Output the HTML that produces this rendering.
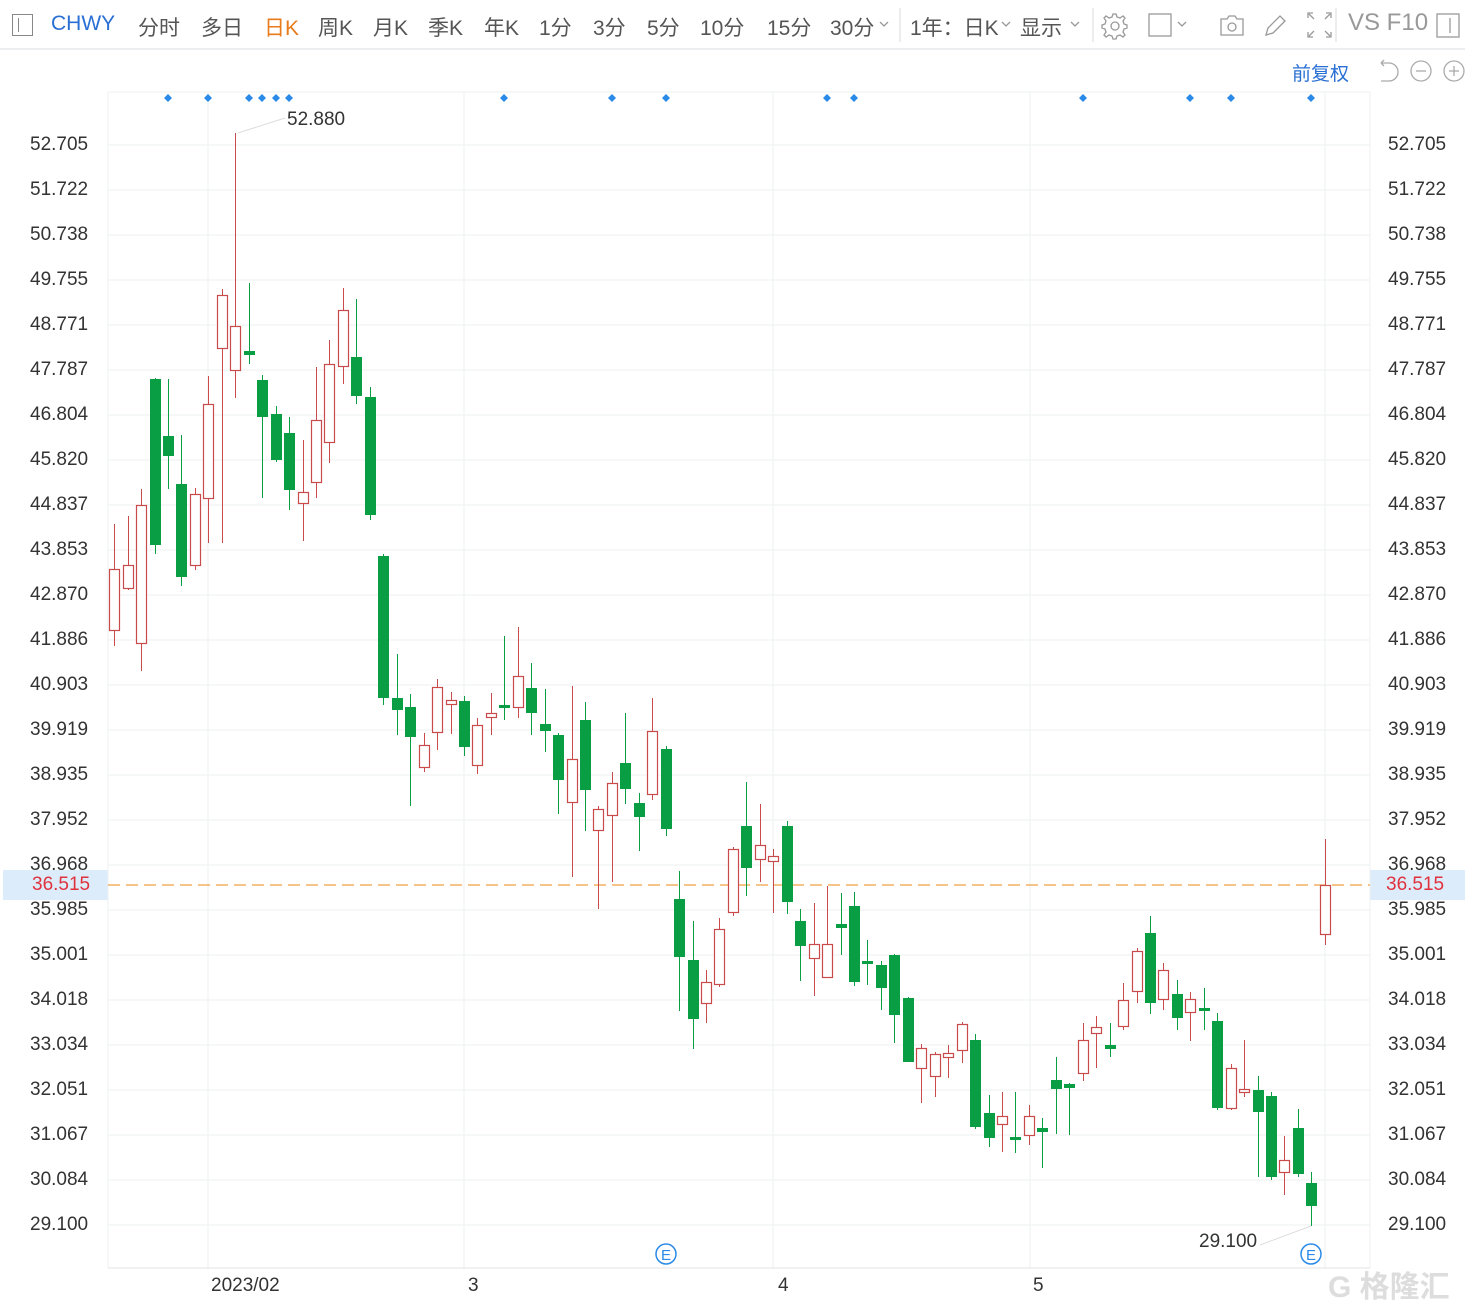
<!DOCTYPE html>
<html><head><meta charset="utf-8">
<style>
body{margin:0;width:1465px;height:1307px;background:#fff;position:relative;overflow:hidden;font-family:"Liberation Sans","Noto Sans CJK SC",sans-serif;}
.t{position:absolute;font-size:21px;color:#555;top:12px;white-space:nowrap;}
.l{position:absolute;font-size:19px;color:#333;white-space:nowrap;}
</style></head><body>
<div style="position:absolute;left:0;top:0;width:1465px;height:48px;border-bottom:2px solid #eceef0;"></div>
<div style="position:absolute;left:12px;top:14px;width:21px;height:22px;border:1.5px solid #888;box-sizing:border-box"><div style="position:absolute;left:5px;top:3px;width:1px;height:14px;background:#888"></div></div>
<span class="t" style="left:51px;color:#2a6fd4">CHWY</span>
<span class="t" style="left:138px">分时</span>
<span class="t" style="left:201px">多日</span>
<span class="t" style="left:264px;color:#e87b1c">日K</span>
<span class="t" style="left:318px">周K</span>
<span class="t" style="left:373px">月K</span>
<span class="t" style="left:428px">季K</span>
<span class="t" style="left:484px">年K</span>
<span class="t" style="left:539px">1分</span>
<span class="t" style="left:593px">3分</span>
<span class="t" style="left:647px">5分</span>
<span class="t" style="left:700px">10分</span>
<span class="t" style="left:767px">15分</span>
<span class="t" style="left:830px">30分</span>
<span class="t" style="left:910px">1年：日K</span>
<span class="t" style="left:1020px">显示</span>
<span class="t" style="left:1348px;font-size:24px;top:9px;color:#999">VS F10</span>
<svg style="position:absolute;left:0;top:0" width="1465" height="50">
<g fill="none" stroke="#999" stroke-width="1.3">
<path d="M880 22l4 4 4-4"/><path d="M1002 22l4 4 4-4"/><path d="M1071 22l4 4 4-4"/><path d="M1178 22l4 4 4-4"/>
<line x1="900" y1="8" x2="900" y2="42" stroke="#e3e3e3"/><line x1="1093" y1="8" x2="1093" y2="42" stroke="#e3e3e3"/><line x1="1336" y1="8" x2="1336" y2="42" stroke="#e3e3e3"/>
<path d="M1115 13l3 0 1 3 3 1 3-2 2 2-2 3 1 3 3 1v3l-3 1-1 3 2 3-2 2-3-2-3 1-1 3h-3l-1-3-3-1-3 2-2-2 2-3-1-3-3-1v-3l3-1 1-3-2-3 2-2 3 2 3-1z" transform="translate(-2,1)"/>
<circle cx="1115" cy="26" r="4"/>
<rect x="1149" y="14" width="22" height="22"/>
<path d="M1221 19h6l2-3h6l2 3h6v16h-22z"/><circle cx="1232" cy="27" r="4"/>
<path d="M1266 35l2-7 12-12 5 5-12 12z"/>
<path d="M1308 18v-5h5M1326 13h5v5M1308 32v5h5M1331 32v5h-5M1309 14l5 5M1330 14l-5 5M1309 36l5-5M1330 36l-5-5"/>
<rect x="1437" y="14" width="22" height="23"/><line x1="1450" y1="18" x2="1450" y2="33"/>
</g></svg>
<span class="t" style="left:1292px;top:59px;font-size:19px;color:#2a6fd4">前复权</span>
<svg style="position:absolute;left:1375px;top:58px" width="90" height="28" fill="none" stroke="#aaa" stroke-width="1.3">
<path d="M6 5h8a9 9 0 0 1 0 18h-8M6 5l3-3M6 5l3 3"/>
<circle cx="46" cy="13" r="10"/><line x1="41" y1="13" x2="51" y2="13"/>
<circle cx="79" cy="13" r="10"/><line x1="74" y1="13" x2="84" y2="13"/><line x1="79" y1="8" x2="79" y2="18"/>
</svg>
<div style="position:absolute;left:3px;top:870px;width:105px;height:30px;background:#dcecfb"></div>
<div style="position:absolute;left:1370px;top:870px;width:95px;height:30px;background:#dcecfb"></div>
<svg id="c" style="position:absolute;left:0;top:0" width="1465" height="1307"></svg>
<div id="labels"></div>
<span class="l" style="left:287px;top:109px">52.880</span>
<span class="l" style="left:1199px;top:1231px">29.100</span>
<span class="l" style="left:211px;top:1275px">2023/02</span>
<span class="l" style="left:468px;top:1275px">3</span>
<span class="l" style="left:778px;top:1275px">4</span>
<span class="l" style="left:1033px;top:1275px">5</span>
<span style="position:absolute;left:1328px;top:1262px;font-size:30px;color:#ddd;font-weight:bold;white-space:nowrap">G 格隆汇</span>
<script>
var s='';
var prices=["52.705","51.722","50.738","49.755","48.771","47.787","46.804","45.820","44.837","43.853","42.870","41.886","40.903","39.919","38.935","37.952","36.968","35.985","35.001","34.018","33.034","32.051","31.067","30.084","29.100"];
var lab='';
for(var i=0;i<prices.length;i++){var y=145+i*45;
s+='<line x1="108" y1="'+y+'" x2="1370" y2="'+y+'" stroke="#eef0f2"/>';
lab+='<span class="l" style="left:30px;top:'+(y-11)+'px">'+prices[i]+'</span><span class="l" style="left:1388px;top:'+(y-11)+'px">'+prices[i]+'</span>';}
lab+='<span class="l" style="left:32px;top:874px;color:#e0323c">36.515</span><span class="l" style="left:1386px;top:874px;color:#e0323c">36.515</span>';
document.getElementById('labels').innerHTML=lab;
[108,208,464,773,1030,1325,1370].forEach(function(x){s+='<line x1="'+x+'" y1="92" x2="'+x+'" y2="1268" stroke="#eef0f2"/>';});
s+='<line x1="108" y1="92" x2="1370" y2="92" stroke="#eef0f2"/><line x1="108" y1="1268" x2="1370" y2="1268" stroke="#e3e3e3"/>';
s+='<line x1="108" y1="885" x2="1370" y2="885" stroke="#f0a040" stroke-dasharray="12,6" stroke-width="1.3"/>';
[168,208,249,262,276,289,504,612,666,827,854,1083,1190,1231,1311].forEach(function(x){s+='<path d="M'+x+' 94l4 4-4 4-4-4z" fill="#2a8ae8"/>';});
s+='<line x1="238" y1="133" x2="285" y2="118" stroke="#ddd"/><line x1="1260" y1="1245" x2="1311" y2="1226" stroke="#ddd"/>';
var d=[[114,569,630,524,646,'r'],[128,565,588,516,590,'r'],[141,505,643,489,671,'r'],[155,379,545,378,554,'g'],[168,436,456,379,489,'g'],[181,484,577,435,586,'g'],[195,494,565,488,570,'r'],[208,404,498,376,543,'r'],[222,295,348,289,543,'r'],[235,326,370,133,398,'r'],[249,351,355,283,364,'g'],[262,380,417,375,498,'g'],[276,414,460,406,462,'g'],[289,433,490,417,510,'g'],[303,492,503,440,541,'r'],[316,420,482,367,498,'r'],[329,364,442,340,463,'r'],[343,310,366,288,384,'r'],[356,357,396,299,404,'g'],[370,397,515,387,520,'g'],[383,556,698,554,705,'g'],[397,698,710,654,735,'g'],[410,707,737,694,806,'g'],[424,745,767,733,772,'r'],[437,687,732,679,750,'r'],[451,700,704,692,734,'r'],[464,701,747,696,756,'g'],[477,725,765,718,774,'r'],[491,713,717,693,735,'r'],[504,705,708,636,720,'g'],[518,676,707,627,718,'r'],[531,688,713,663,735,'g'],[545,724,731,689,752,'g'],[558,735,780,733,814,'g'],[572,759,802,686,877,'r'],[585,720,790,702,831,'g'],[598,809,830,806,909,'r'],[612,783,815,772,882,'r'],[625,763,789,713,804,'g'],[639,803,817,793,851,'g'],[652,731,794,698,800,'r'],[666,749,829,746,836,'g'],[679,899,957,871,1011,'g'],[693,960,1019,921,1049,'g'],[706,982,1003,970,1023,'r'],[719,929,984,918,987,'r'],[733,849,912,847,916,'r'],[746,826,868,782,896,'g'],[760,845,859,804,882,'r'],[773,856,861,849,913,'r'],[787,826,902,821,914,'g'],[800,921,946,909,981,'g'],[814,944,958,903,996,'r'],[827,944,977,886,977,'r'],[841,924,928,893,955,'g'],[854,906,982,892,986,'g'],[867,961,964,940,985,'g'],[881,965,988,961,1010,'g'],[894,955,1015,954,1043,'g'],[908,998,1062,997,1062,'g'],[921,1048,1068,1044,1103,'r'],[935,1054,1076,1052,1097,'r'],[948,1053,1057,1045,1078,'r'],[962,1024,1050,1022,1063,'r'],[975,1040,1127,1034,1129,'g'],[989,1113,1138,1095,1147,'g'],[1002,1116,1124,1092,1152,'r'],[1015,1137,1139,1092,1153,'g'],[1029,1116,1135,1105,1145,'r'],[1042,1128,1132,1118,1168,'g'],[1056,1080,1089,1057,1134,'g'],[1069,1084,1088,1083,1135,'g'],[1083,1040,1073,1023,1081,'r'],[1096,1027,1033,1016,1068,'r'],[1110,1045,1049,1023,1057,'g'],[1123,1000,1026,983,1030,'r'],[1137,951,991,948,1003,'r'],[1150,933,1003,916,1014,'g'],[1163,970,999,963,1010,'r'],[1177,994,1018,980,1030,'g'],[1190,999,1012,992,1041,'r'],[1204,1008,1011,988,1030,'g'],[1217,1021,1108,1013,1110,'g'],[1231,1068,1108,1064,1110,'r'],[1244,1089,1092,1040,1097,'r'],[1258,1090,1112,1076,1177,'g'],[1271,1096,1177,1092,1180,'g'],[1284,1160,1172,1136,1195,'r'],[1298,1128,1174,1109,1177,'g'],[1311,1183,1206,1172,1226,'g'],[1325,885,934,839,945,'r']];
d.forEach(function(c){var x=c[0],col=c[5]=='r'?'#c94a4a':'#0a9e44';
if(c[5]=='r'){s+='<line x1="'+(x+.5)+'" y1="'+c[3]+'" x2="'+(x+.5)+'" y2="'+c[1]+'" stroke="'+col+'"/><line x1="'+(x+.5)+'" y1="'+c[2]+'" x2="'+(x+.5)+'" y2="'+c[4]+'" stroke="'+col+'"/>';
s+='<rect x="'+(x-4.5)+'" y="'+(c[1]+.5)+'" width="10" height="'+Math.max(c[2]-c[1],2)+'" fill="#fff" stroke="'+col+'" stroke-width="1.2"/>';}
else{s+='<line x1="'+(x+.5)+'" y1="'+c[3]+'" x2="'+(x+.5)+'" y2="'+c[4]+'" stroke="'+col+'"/>';
s+='<rect x="'+(x-5)+'" y="'+c[1]+'" width="11" height="'+Math.max(c[2]-c[1],3)+'" fill="'+col+'"/>';}});
[666,1311].forEach(function(x){s+='<circle cx="'+x+'" cy="1254" r="10" fill="#fff" stroke="#2a8ae8" stroke-width="1.5"/><text x="'+x+'" y="1260" text-anchor="middle" font-size="15" fill="#2a8ae8" font-family="Liberation Sans">E</text>';});
document.getElementById('c').innerHTML=s;
</script>
</body></html>
